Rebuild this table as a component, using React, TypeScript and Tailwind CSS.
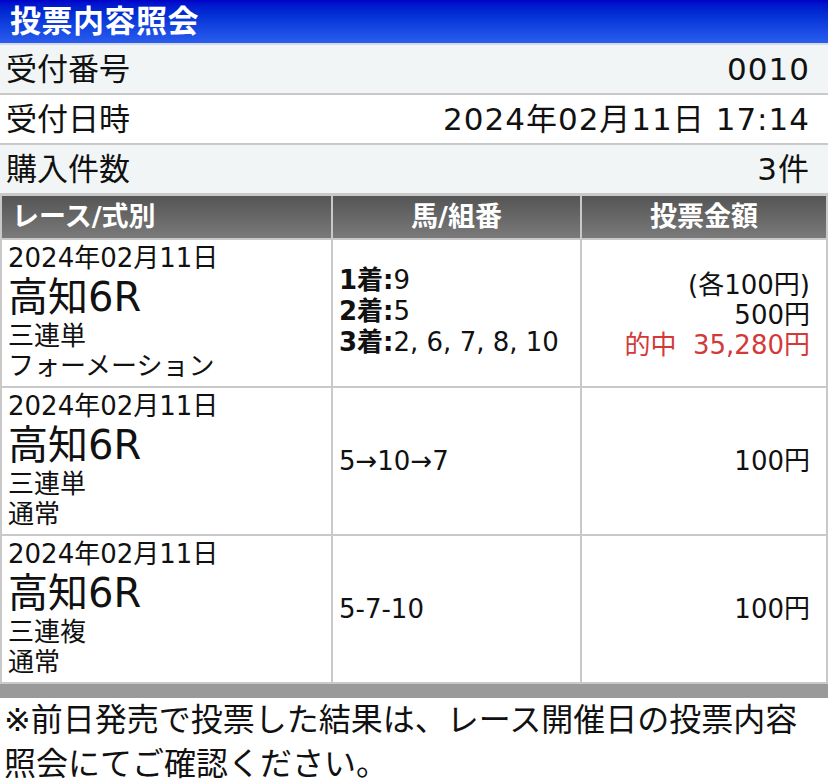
import React from "react";

const font = { fontFamily: '"DejaVu Sans", "Noto Sans CJK JP", sans-serif' };

type Bet = {
  kind: string;
  method: string;
  picks: React.ReactNode;
  amount: React.ReactNode;
};

const bets: Bet[] = [
  {
    kind: "三連単",
    method: "フォーメーション",
    picks: (
      <div className="leading-[31px] pb-[4px]">
        <div>
          <b>1着:</b>9
        </div>
        <div>
          <b>2着:</b>5
        </div>
        <div>
          <b>3着:</b>2, 6, 7, 8, 10
        </div>
      </div>
    ),
    amount: (
      <div className="leading-[30px] text-right pt-[4px]">
        <div>(各100円)</div>
        <div>500円</div>
        <div className="text-[#d23a3a]">的中&nbsp;&nbsp;35,280円</div>
      </div>
    ),
  },
  { kind: "三連単", method: "通常", picks: "5→10→7", amount: "100円" },
  { kind: "三連複", method: "通常", picks: "5-7-10", amount: "100円" },
];

function InfoRow({ label, value, white }: { label: string; value: string; white?: boolean }) {
  return (
    <div
      className={`flex items-center justify-between h-[50px] pl-[6px] pr-[18px] border-b-2 border-[#c9c9c9] text-[31px] text-[#111] ${
        white ? "bg-white" : "bg-[#f1f5f6]"
      }`}
    >
      <span>{label}</span>
      <span className="tracking-[1px]">{value}</span>
    </div>
  );
}

export default function App() {
  return (
    <div className="w-[828px] h-[784px] overflow-hidden bg-white" style={font}>
      <div className="h-[45px] bg-gradient-to-b from-[#0000c8] to-[#2a5cee] border-b-2 border-[#d4dbe6] flex items-center pl-[10px]">
        <h1 className="text-white font-bold text-[31px] tracking-[0.5px]">投票内容照会</h1>
      </div>
      <InfoRow label="受付番号" value="0010" />
      <InfoRow label="受付日時" value="2024年02月11日 17:14" white />
      <InfoRow label="購入件数" value="3件" />

      <div className="grid grid-cols-[329px_247px_1fr] bg-[#c9c9c9] gap-x-[2px] gap-y-[2px] px-[2px] pb-[2px] pt-[1px]">
        <div className="h-[42px] bg-gradient-to-b from-[#555] to-[#7a7a7a] text-white font-bold text-[27px] flex items-center pl-[10px]">
          レース/式別
        </div>
        <div className="h-[42px] bg-gradient-to-b from-[#555] to-[#7a7a7a] text-white font-bold text-[27px] flex items-center justify-center">
          馬/組番
        </div>
        <div className="h-[42px] bg-gradient-to-b from-[#555] to-[#7a7a7a] text-white font-bold text-[27px] flex items-center justify-center">
          投票金額
        </div>
        {bets.map((b, i) => (
          <React.Fragment key={i}>
            <div className="h-[146px] bg-white pl-[6px] pt-[3px] text-[#111]">
              <div className="text-[26px] leading-[30px]">2024年02月11日</div>
              <div className="text-[40px] leading-[48px]">高知6R</div>
              <div className="text-[26px] leading-[30px]">{b.kind}</div>
              <div className="text-[26px] leading-[30px]">{b.method}</div>
            </div>
            <div className="h-[146px] bg-white flex items-center pl-[6px] text-[26px] text-[#111]">
              {b.picks}
            </div>
            <div className="h-[146px] bg-white flex items-center justify-end pr-[16px] text-[26px] text-[#111]">
              {b.amount}
            </div>
          </React.Fragment>
        ))}
      </div>
      <div className="h-[14px] bg-[#9a9a9a]" />
      <p className="text-[32px] leading-[44px] text-[#111] pl-[4px]">
        ※前日発売で投票した結果は、レース開催日の投票内容照会にてご確認ください。
      </p>
    </div>
  );
}
